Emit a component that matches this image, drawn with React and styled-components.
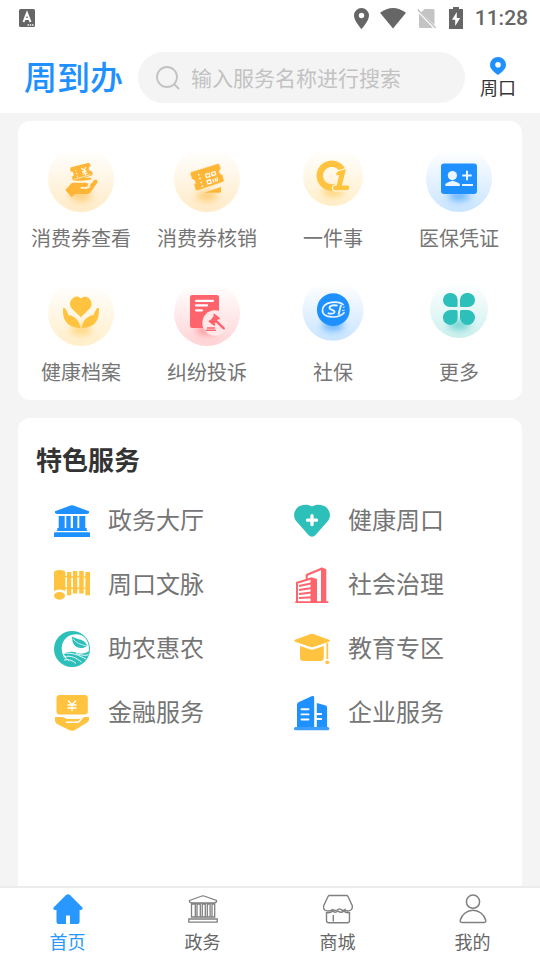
import React from "react";
import styled, { createGlobalStyle } from "styled-components";

const BLUE = "#1e90ff";
const AMBER = "#ffb636";
const YELLOW = "#ffc340";
const RED = "#ff646c";
const TEAL = "#2dbfba";

const GlobalStyle = createGlobalStyle`
  *, *::before, *::after { box-sizing: border-box; }
  body {
    margin: 0;
    background: #f4f4f4;
    color: #757575;
    font-family: "Noto Sans CJK SC", sans-serif;
  }
  button, input { font: inherit; }
`;

const Page = styled.div`
  min-height: 100vh;
  display: flex;
  flex-direction: column;
`;

const StatusBar = styled.div`
  display: flex;
  align-items: center;
  justify-content: space-between;
  height: 36px;
  padding: 0 12px 0 19px;
  background: #fff;
`;

const StatusGroup = styled.div`
  display: flex;
  align-items: center;
  gap: 11px;
`;

const Clock = styled.time`
  font: 500 21px/36px Roboto, sans-serif;
  color: #666;
`;

const Header = styled.header`
  display: flex;
  align-items: center;
  padding: 16px 24px 10px;
  background: #fff;
`;

const Brand = styled.h1`
  margin: 0;
  padding-bottom: 2px;
  font-size: 33px;
  line-height: 49px;
  font-weight: 500;
  color: ${BLUE};
`;

const SearchBox = styled.label`
  flex: 1;
  min-width: 0;
  display: flex;
  align-items: center;
  gap: 11px;
  height: 51px;
  margin: 0 15px;
  padding: 0 18px;
  border-radius: 26px;
  background: #f4f4f4;
`;

const SearchInput = styled.input`
  flex: 1;
  min-width: 0;
  padding: 0 0 2px;
  border: 0;
  outline: 0;
  background: transparent;
  font-size: 21px;
  line-height: 32px;
  color: #333;
  &::placeholder { color: #c2c2c2; opacity: 1; }
`;

const LocationButton = styled.button`
  display: flex;
  flex-direction: column;
  align-items: center;
  padding: 0;
  border: 0;
  background: none;
  font-size: 18px;
  line-height: 24px;
  color: #333;
`;

const Main = styled.main`
  flex: 1;
  display: flex;
  flex-direction: column;
  gap: 18px;
  padding: 8px 18px 0;
`;

const ServiceCard = styled.section`
  display: grid;
  grid-template-columns: repeat(4, 1fr);
  row-gap: 27px;
  padding: 25px 0 13px;
  border-radius: 12px;
  background: #fff;
`;

const ServiceLink = styled.a`
  display: flex;
  flex-direction: column;
  align-items: center;
  gap: 11px;
  font-size: 20px;
  line-height: 30px;
  white-space: nowrap;
  color: inherit;
  text-decoration: none;
`;

const FeatureCard = styled.section`
  flex: 1;
  padding: 23px 12px 0;
  border-radius: 12px 12px 0 0;
  background: #fff;
`;

const CardTitle = styled.h2`
  margin: 0 0 12px;
  padding-left: 6px;
  font-size: 26px;
  line-height: 36px;
  font-weight: 700;
  color: #333;
`;

const FeatureGrid = styled.div`
  display: grid;
  grid-template-columns: repeat(2, 1fr);
`;

const FeatureLink = styled.a`
  display: flex;
  align-items: center;
  gap: 18px;
  height: 64px;
  padding-left: 24px;
  color: inherit;
  text-decoration: none;
`;

const FeatureLabel = styled.span`
  padding-bottom: 4px;
  font-size: 24px;
  line-height: 36px;
`;

const TabBar = styled.nav`
  position: sticky;
  bottom: 0;
  display: grid;
  grid-template-columns: repeat(4, 1fr);
  padding: 6px 0 5px;
  border-top: 2px solid #ececec;
  background: #fff;
`;

const Tab = styled.a`
  display: flex;
  flex-direction: column;
  align-items: center;
  gap: 3px;
  font-size: 18px;
  line-height: 28px;
  color: ${(p) => (p.$active ? "#2898ff" : "#666")};
  text-decoration: none;
`;

const Icon = ({ w, h = w, children, ...rest }) => (
  <svg width={w} height={h} viewBox={`0 0 ${w} ${h}`} fill="none" aria-hidden="true" {...rest}>
    {children}
  </svg>
);

function Bubble({ id, color, cy = 33, r = 33, shadowY = 50, strength = 0.28, children }) {
  return (
    <Icon w={66}>
      <defs>
        <linearGradient id={`fade-${id}`} x1="0" y1="0" x2="0" y2="1">
          <stop offset="0.06" stopColor={color} stopOpacity="0" />
          <stop offset="1" stopColor={color} stopOpacity={strength} />
        </linearGradient>
        <filter id={`soft-${id}`} x="-50%" y="-100%" width="200%" height="300%">
          <feGaussianBlur stdDeviation="3.5" />
        </filter>
      </defs>
      <circle cx="33" cy={cy} r={r} fill={`url(#fade-${id})`} />
      <ellipse cx="33" cy={shadowY} rx="11" ry="5" fill={color} opacity="0.6" filter={`url(#soft-${id})`} />
      {children}
    </Icon>
  );
}

const services = [
  {
    label: "消费券查看",
    icon: (
      <Bubble id="view" color={AMBER}>
        <path d="M24 21 40 17.1q1.8-.4 2.2 1.3l.5 1.8a2.5 2.5 0 0 0 1.1 4.9l.8 2.6q.3 1.4-1 1.8l-7.5 2.2h7.2v1.7q-5 1-7.4 1.1-10.4 1-11.4-1l-.6-2.8a2.6 2.6 0 0 0-1.4-5l-.4-2.4q-.3-1.8 1.9-2.3Z" fill={AMBER} />
        <path d="m26.5 33.2 16-4.6" stroke="#fff5df" strokeWidth=".8" />
        <path d="m27.7 24.2 1.8 7" stroke="#fff" strokeWidth="1" strokeDasharray="1.2 1.7" />
        <path d="m33.2 22.2 3.1 2.1 1.5-3.3M34 26.1l4.8-1.3M34.6 28.3l4.8-1.3M36.3 24.3l1.4 5" stroke="#fff" strokeWidth="1.1" />
        <path d="M17.3 44 23 37.8q1-1.1 2.6-1.1h11.8q2.9 0 2.7 2.2-.3 1.8-2.4 2h-5v1.5h6.100l7.100-8q1.400-1.500 3-.5 1.500 1.100.4 2.800l-6.500 9.400q-1.200 1.900-3.200 2H27.200l-3.500 3.100Z" fill={AMBER} />
        <path d="M32.800 42h6.500q2.300-.4 2.700-2.600" stroke="#fff5df" strokeWidth="1.200" />
      </Bubble>
    ),
  },
  {
    label: "消费券核销",
    icon: (
      <Bubble id="redeem" color={AMBER}>
        <path d="M31 46.5 47 41v4.2q0 1.500-1.500 1.500H32Z" fill={AMBER} />
        <path d="m17.5 25.7 25.8-8q2-.5 2.500 1.200l1.200 4.200a2.800 2.800 0 0 0 1.500 5.300l1.600 5.300q.4 1.900-1.300 2.500l-25 8.500q-2 .6-2.500-1.200l-1.500-4.700a2.800 2.800 0 0 0-1.800-5.200l-1.900-5.500q-.4-1.800 1.400-2.400Z" fill={AMBER} stroke="#fff1d6" strokeWidth=".8" />
        <path d="m24.600 28 4.500 15" stroke="#fff" strokeWidth="1.500" strokeDasharray="1.500 2.500" />
        <path d="m31.500 28.300 3.700-.9.9 3.100-3.700 1ZM37.400 26.500l3.500-1 .9 3.200-3.500 1ZM33 34.700l3.400-.9 1 3.200-3.500.9ZM38.800 33.100l1.200 3.500M41 32.200l1.200 3.500M43 31.300l.5 3.900" stroke="#fff" strokeWidth="1.200" />
      </Bubble>
    ),
  },
  {
    label: "一件事",
    icon: (
      <Bubble id="one" color={YELLOW} cy={30} r={30} shadowY={46}>
        <path d="M42.200 24A11.900 11.900 0 1 0 35.800 40.800" stroke={YELLOW} strokeWidth="6.400" />
        <path d="m38 25.300 7.900-2.100-4 16.400h5.700q2 0 1.700 2.200t-2.200 2.400H34.800q-2.100-.1-1.800-2.400t2.500-2.200h1.200l2.500-10.500-2.200.4q-2.100-2.300 1-3.800Z" fill={YELLOW} stroke="#fff6df" strokeWidth="2.400" paintOrder="stroke" />
      </Bubble>
    ),
  },
  {
    label: "医保凭证",
    icon: (
      <Bubble id="medical" color={BLUE} strength={0.24}>
        <rect x="15" y="17.500" width="36" height="30.500" rx="3" fill={BLUE} />
        <circle cx="26.400" cy="29.600" r="4.600" fill="#eaf5ff" />
        <path d="M19.400 40v-1.800q0-1.400 7.100-3.500 7.300 2 7.300 3.500V40Z" fill="#eaf5ff" />
        <path d="M41 24.700v9.600M36.300 29.500h9.400M36 39h11" stroke="#eaf5ff" strokeWidth="2" />
      </Bubble>
    ),
  },
  {
    label: "健康档案",
    icon: (
      <Bubble id="health" color={YELLOW}>
        <path d="M32.800 37.300 23.500 28.200c-5-6.300 3.600-15.700 9.300-9.600 6-6 14.300 3.300 9.200 9.600Z" fill={YELLOW} />
        <path id="palm" d="M15 28.300q2-1.200 3.200 1.600l2.600 5.700q.7-.6 1.900-.4 9 4.100 9.600 12.900-10.800-.2-14.600-6.500Q14.800 38 15 28.300Z" fill={YELLOW} />
        <use href="#palm" transform="translate(66 0) scale(-1 1)" />
      </Bubble>
    ),
  },
  {
    label: "纠纷投诉",
    icon: (
      <Bubble id="dispute" color={RED}>
        <rect x="16" y="15" width="29" height="33" rx="2.200" fill={RED} />
        <path d="M22 20.800h17M22 25.400h11M22 30.300h6" stroke="#fff" strokeWidth="2.200" strokeLinecap="round" />
        <circle cx="41" cy="43" r="12.700" fill="#ffe8e9" />
        <path d="m35.400 41.600 5.100-6.600 4.400 3.300-5.100 6.700Z" fill={RED} />
        <path d="m39.600 34.300 6 4.600M34.900 40.700l6 4.600" stroke={RED} strokeWidth="1.900" />
        <path d="m42 40.800 7.800 7.500" stroke={RED} strokeWidth="2.400" strokeLinecap="round" />
        <path d="M33 48h8M31.700 50.300h10.200" stroke={RED} strokeWidth="1.600" />
      </Bubble>
    ),
  },
  {
    label: "社保",
    icon: (
      <Bubble id="social" color={BLUE} cy={30.3} r={30.5} shadowY={46} strength={0.24}>
        <circle cx="33.300" cy="29.700" r="16.400" fill={BLUE} />
        <path d="M43.500 25C39 20.200 22.800 21.200 22.500 30.200c-.2 8.300 16.400 9 22 2.100" stroke="#eaf5ff" strokeWidth="1.700" />
        <path d="M37.600 25.700c-4.700-1.300-8.500.3-8 2.500.4 2 5.500 1.500 4.900 4-.6 1.700-4 1.600-6.800.9M41 25l-2.500 9.700" stroke="#eaf5ff" strokeWidth="1.900" />
        <path d="m42.700 27.500 2-.8M42 30.500l2.700-.3" stroke="#eaf5ff" strokeWidth=".9" />
      </Bubble>
    ),
  },
  {
    label: "更多",
    icon: (
      <Bubble id="more" color={TEAL} cy={29} r={29} shadowY={45} strength={0.24}>
        <path d="M17 20a7 7 0 0 1 7-7h.6a7 7 0 0 1 7 7v5.500q0 1.500-1.500 1.500H24a7 7 0 0 1-7-7ZM34 20a7 7 0 0 1 7-7h1a7 7 0 0 1 0 14h-6.500q-1.500 0-1.500-1.500ZM17 37.500a7.500 7.500 0 0 1 7-7.500h6.100q1.500 0 1.500 1.500v6.200a7.300 7.300 0 0 1-14.600 0ZM34 31.500q0-1.500 1.500-1.500h6a7.500 7.500 0 1 1-7.500 7.500Z" fill={TEAL} />
      </Bubble>
    ),
  },
];

const features = [
  {
    label: "政务大厅",
    icon: (
      <Icon w={36}>
        <path d="M1 8.300 16.500 2.500q1.500-.5 3 0L35 8.300V10l-2 1H3l-2-1ZM4.700 13h6v12h-6ZM12.300 13h4.400v12h-4.400ZM19 13h4.400v12H19ZM25.300 13h6v12h-6ZM3.300 27V25h29.400v2l1 1H2.500ZM0 30.300q0-1 1-1h34q1 0 1 1V34H0Z" fill={BLUE} />
      </Icon>
    ),
  },
  {
    label: "健康周口",
    icon: (
      <Icon w={36}>
        <path d="M18 3.500C22 1 28.500 1 32.500 4.500c4.500 4.500 4.500 10.500.5 14.500L21.500 32q-3.500 3.500-7 0L3 19C-1 15-1 9 3.500 4.500 7.500 1 14 1 18 3.500Z" fill={TEAL} />
        <path d="M18 12.700v9M13.500 17.200h9" stroke="#fff" strokeWidth="3.300" strokeLinecap="round" />
      </Icon>
    ),
  },
  {
    label: "周口文脉",
    icon: (
      <Icon w={36}>
        <path d="M0 5.500Q0 3 5.700 3t5.700 2.500V24Q5 21 0 24ZM13 5h4.300v23.300H13ZM19 4h4.300v22.600H19ZM25.200 4h4.500v22.600h-4.500ZM31.400 5H36v23.300h-4.600Z" fill={YELLOW} />
        <path d="M11 9.500h2M11 21.300h2M17 10h2.200M17 21.300h2.200M23 9.500h2.500M23 21.300h2.500M29.500 10h2.200M29.500 21.300h2.200" stroke={YELLOW} strokeWidth="1.500" />
        <ellipse cx="5.500" cy="28.800" rx="5.500" ry="3.900" fill={YELLOW} />
      </Icon>
    ),
  },
  {
    label: "社会治理",
    icon: (
      <Icon w={36}>
        <path d="M27 .8 28 .5 32.300 2.200V35H27ZM16.500 11 18 10.400l5 1.500V35h-6.500ZM1.300 34.300h33V36h-33Z" fill={RED} />
        <path d="M12.700 12V8L28 1.500M3 35V15.800L18 11.300M5 18.900l13-2.600M5 22.900l13-1.900M5 26.900l13-1.400M5 30.900l13-.6" stroke={RED} strokeWidth="2" />
      </Icon>
    ),
  },
  {
    label: "助农惠农",
    icon: (
      <Icon w={36}>
        <circle cx="18" cy="18" r="18" fill={TEAL} />
        <path d="M18 3.800c10-2.500 17 4 17 14.200 0 7-4.500 12.500-11 13.800C15 32 8 27 7.700 18.500 7.400 11 11.500 5.500 18 3.800Z" fill="#fff" />
        <path d="M18 5.500c6.800 4 11.300 1.500 15.400 9.200-6.200 4.600-15.700 2.600-15.400-9.200Z" fill={TEAL} />
        <path d="M18.800 7.500c3 4.400 7.500 6 14 7.500" stroke="#fff" strokeWidth=".7" />
        <path d="M9.500 22.500q6.500-3 14-.5 5.500 2 12-2-3 11-12 13.500Q14 32 9.500 22.500Z" fill={TEAL} />
        <path d="M9 22.500c9-1.700 17 2.500 23 5.500M9.500 26c8-2.500 13 1.500 18 5M10 29c6-1 9 1 12 3.500M22 22.500c6 2 9 2.300 12.500 1.200" stroke="#fff" strokeWidth=".9" />
      </Icon>
    ),
  },
  {
    label: "教育专区",
    icon: (
      <Icon w={36}>
        <path d="M1 8.700 16.500 3q1.500-.5 3 0L35 8.700q1.500 1 0 2L19.500 16q-1.500.6-3 0L1 10.700q-1.500-1 0-2ZM6 15l10.600 3.400q1.400.4 2.800 0L29.800 15v11.500q0 3.500-3.500 3.500H9.500Q6 30 6 26.500Z" fill={YELLOW} />
        <path d="M33.300 12v16" stroke={YELLOW} strokeWidth="1.700" />
        <circle cx="33.300" cy="31.300" r="1.900" fill={YELLOW} />
      </Icon>
    ),
  },
  {
    label: "金融服务",
    icon: (
      <Icon w={36}>
        <rect x="2.500" width="31.300" height="19.500" rx="3" fill={YELLOW} />
        <path d="m14 5.500 4 4.300 4-4.300M13.500 10h9M13.500 13h9M18 9.800V16" stroke="#fff" strokeWidth="1.300" />
        <path d="M1 22h6q3 0 6 2h11q3-.2 3.500-2H35v3q-1 2.500-6 5l-8 5q-3 1.300-6 0L4 29.500Q1 28 1 25Z" fill={YELLOW} />
        <path d="M12.500 27.300H22q4-.3 5-3.300.6-2 3-2.500" stroke="#fff" strokeWidth="1.500" strokeLinecap="round" />
      </Icon>
    ),
  },
  {
    label: "企业服务",
    icon: (
      <Icon w={36}>
        <path d="M3 9.500Q3 8 4.500 7.300L17.500 1.300Q20.200.4 20.200 2.500V32H3ZM22.800 8l9 2.600q1.300.4 1.300 1.800V32H22.800Z" fill={BLUE} />
        <rect y="32" width="35.300" height="3.200" rx="1.500" fill="#3d9eff" />
        <path d="M7.500 14.300h7M7.500 19.400h7M7.500 24.500h7M22.800 19h4.400M22.800 24h4.400" stroke="#fff" strokeWidth="1.900" strokeLinecap="round" />
      </Icon>
    ),
  },
];

const tabs = [
  {
    label: "首页",
    icon: (
      <Icon w={30}>
        <path d="M13 1q2-1.600 4 0l12.200 12.200q1.500 2.600-1.700 2.800h-.9v12q0 2-2 2H17v-8.500h-4V30H5.500q-2 0-2-2V16h-1Q-.8 15.800.8 13.200Z" fill="#2898ff" />
      </Icon>
    ),
  },
  {
    label: "政务",
    icon: (
      <Icon w={30} stroke="#808080" strokeWidth="1.300">
        <path d="M1.500 6.500 14 2q1-.3 2 0l12.500 4.500v1.300L26.500 9h-23l-2-1.200ZM3.500 10h3.800v13H3.500ZM9 10h3.300v13H9ZM14.300 10h3v13h-3ZM19.300 10h2.800v13h-2.800ZM24 10h2.700v13H24ZM3 23h24M.8 25h28.400v3.200H.8Z" />
      </Icon>
    ),
  },
  {
    label: "商城",
    icon: (
      <Icon w={30} stroke="#808080" strokeWidth="1.400">
        <path d="M6.500 1.500h17q1 0 1.500 1l4.200 9q.8 5-4.200 5.500-2.500 0-3-1.500-2 2-4 0-1.200-1.200-3 0-3 2-5.500 0-2 1.800-5.500 1.400-4.500-1-3.200-5.400l4.200-9q.5-1 1.500-1Z" />
        <path d="M3.500 18.700q4.500.5 6-1.700 2.500 2.500 5.500 0 3 2.700 6 0 1.500 2.200 5.500 1.700v7.800q0 2.300-2.300 2.300H5.800q-2.300 0-2.300-2.300ZM10.300 21v6.500" />
      </Icon>
    ),
  },
  {
    label: "我的",
    icon: (
      <Icon w={30} stroke="#808080" strokeWidth="1.500">
        <circle cx="15" cy="7.700" r="6.600" />
        <path d="M15 16.200C9 16.200 4 20.500 2.300 26q-.6 2.500 2 2.600h21.400q2.600-.1 2-2.600C26 20.500 21 16.200 15 16.200Z" />
      </Icon>
    ),
  },
];

export default function App() {
  return (
    <Page>
      <GlobalStyle />
      <StatusBar>
        <Icon w={16} h={18}>
          <rect width="16" height="18" rx="1.500" fill="#666" />
          <path d="m4.500 13 3.500-9 3.500 9M5.700 10h4.600" stroke="#fff" strokeWidth="2" />
          <path d="M8.500 16h6" stroke="#fff" strokeWidth="1.400" strokeDasharray="1.400 .9" />
        </Icon>
        <StatusGroup>
          <Icon w={15} h={21}>
            <path fillRule="evenodd" d="M7.500 0A7.500 7.500 0 0 0 0 7.500C0 13 7.500 21 7.500 21S15 13 15 7.500A7.500 7.500 0 0 0 7.500 0Zm0 4.800a2.700 2.700 0 1 1 0 5.400 2.700 2.700 0 0 1 0-5.400Z" fill="#666" />
          </Icon>
          <Icon w={26} h={21}>
            <path d="M0 4.700Q13-4.700 26 4.700L13 20.500Z" fill="#666" />
          </Icon>
          <Icon w={20} h={21}>
            <path d="M7.500 1H16q1.500 0 1.500 1.500V17L4 4.500ZM2 5.500 16 20H3.500Q2 20 2 18.500Z" fill="#c4c4c4" />
            <path d="m.7 1.500 18 18.500" stroke="#c4c4c4" strokeWidth="1.600" />
          </Icon>
          <Icon w={16} h={22}>
            <path d="M5 0h6v2h4v20H1V2h4Z" fill="#666" />
            <path d="M8.800 5 4 12.700h3.200V19l5-8H8.800Z" fill="#fff" />
          </Icon>
          <Clock>11:28</Clock>
        </StatusGroup>
      </StatusBar>

      <Header>
        <Brand>周到办</Brand>
        <SearchBox>
          <Icon w={24} stroke="#c2c2c2" strokeWidth="1.800" strokeLinecap="round">
            <circle cx="11" cy="11" r="10" />
            <path d="m18.500 18.500 4 4" />
          </Icon>
          <SearchInput type="search" aria-label="搜索服务" placeholder="输入服务名称进行搜索" />
        </SearchBox>
        <LocationButton type="button">
          <Icon w={16} h={18}>
            <path fillRule="evenodd" d="M8 0a8 8 0 0 0-8 8c0 4.500 5.500 8 8 10 2.500-2 8-5.500 8-10a8 8 0 0 0-8-8Zm0 5a2.800 2.800 0 1 1 0 5.600A2.800 2.800 0 0 1 8 5Z" fill={BLUE} />
          </Icon>
          周口
        </LocationButton>
      </Header>

      <Main>
        <ServiceCard>
          {services.map((s) => (
            <ServiceLink href="#" key={s.label}>
              {s.icon}
              {s.label}
            </ServiceLink>
          ))}
        </ServiceCard>
        <FeatureCard>
          <CardTitle>特色服务</CardTitle>
          <FeatureGrid>
            {features.map((f) => (
              <FeatureLink href="#" key={f.label}>
                {f.icon}
                <FeatureLabel>{f.label}</FeatureLabel>
              </FeatureLink>
            ))}
          </FeatureGrid>
        </FeatureCard>
      </Main>

      <TabBar>
        {tabs.map((t, i) => (
          <Tab href="#" key={t.label} $active={i === 0} aria-current={i === 0 ? "page" : undefined}>
            {t.icon}
            {t.label}
          </Tab>
        ))}
      </TabBar>
    </Page>
  );
}
